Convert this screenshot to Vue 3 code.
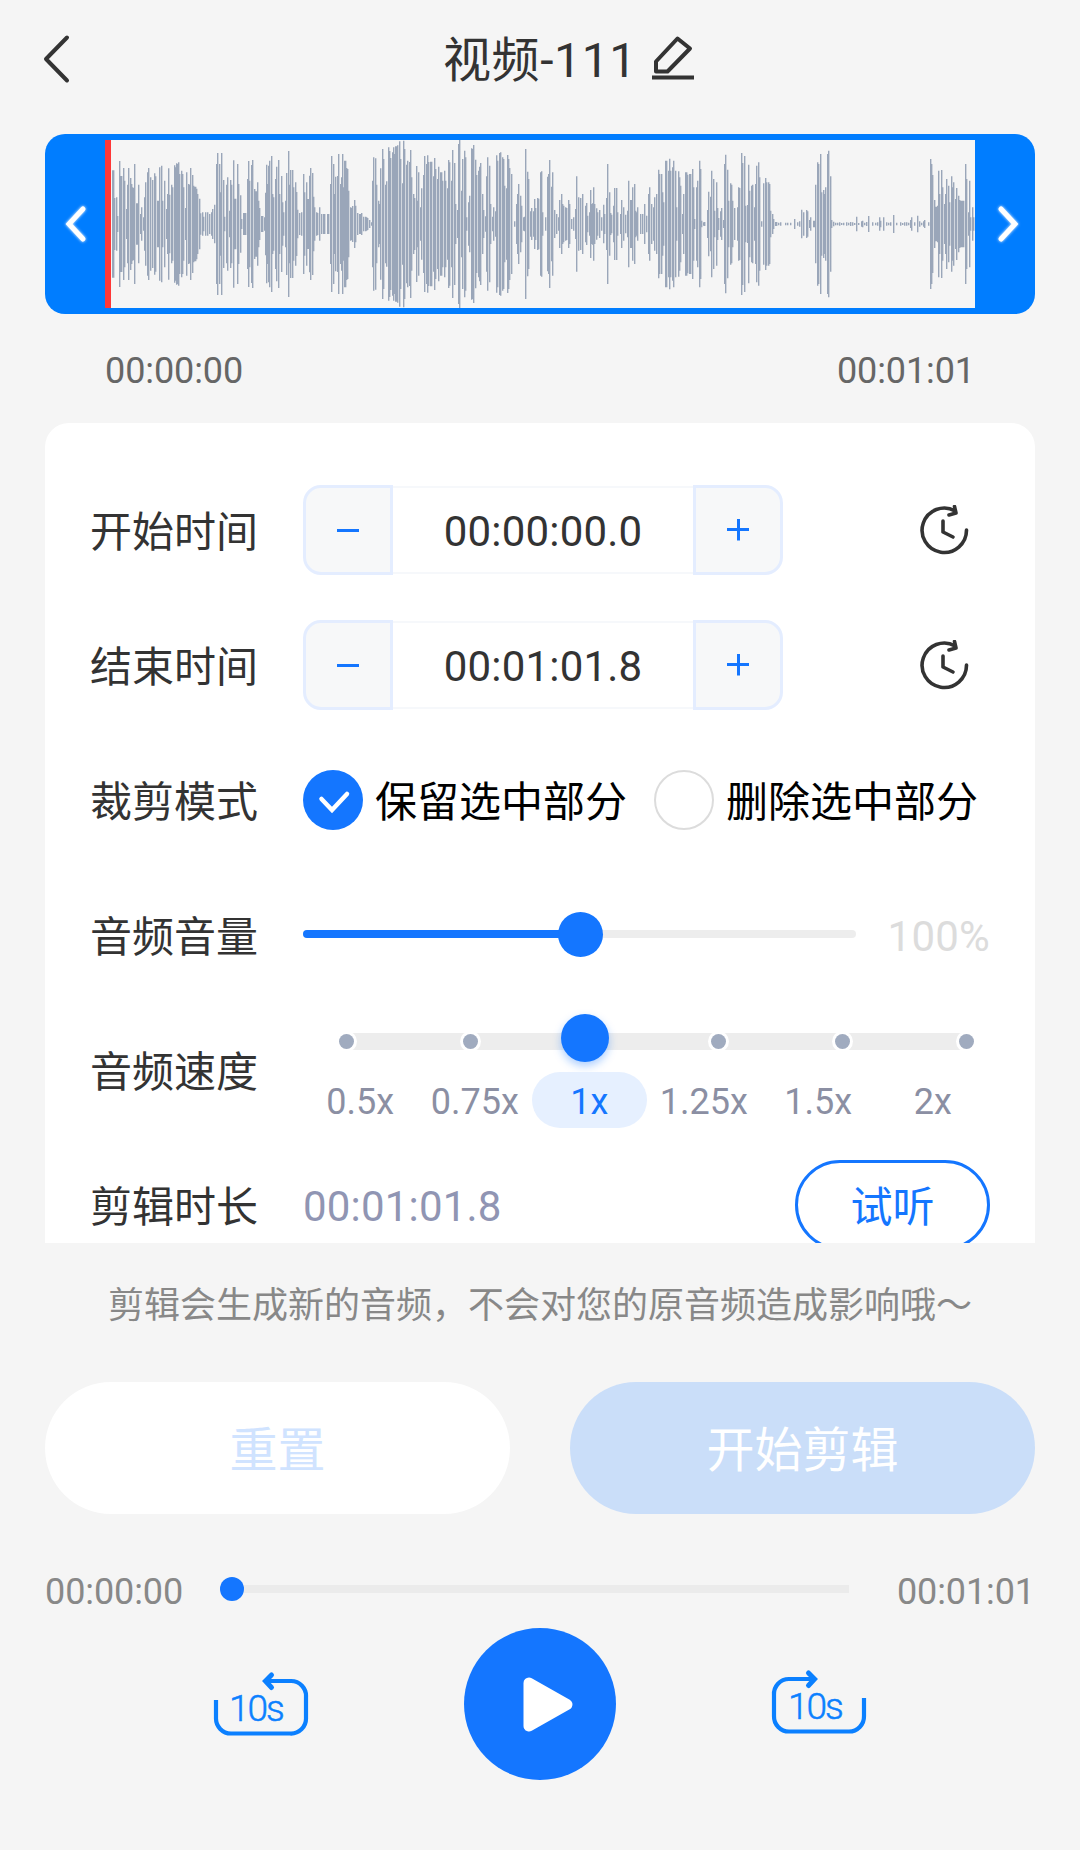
<script setup>
import { ref } from 'vue'

const title = ref('视频-111')
const times = [
  { label: '开始时间', value: '00:00:00.0' },
  { label: '结束时间', value: '00:01:01.8' },
]
const modes = [
  { label: '保留选中部分', checked: true },
  { label: '删除选中部分', checked: false },
]
const speeds = ['0.5x', '0.75x', '1x', '1.25x', '1.5x', '2x']
const speedIndex = 2
const volumePercent = 50

// Each chunk: offset on the wave axis, then "position height" pairs.
const chunks = [
  [-213, '217 161 220 161 223 78 229 80 232 24 238 189 241 144 244 144 250 168 253 130 260 45 263 118 265 168 271 138 274 120 277 110 280 108 283 180 290 62 293 62 295 118 302 30 304 50 310 20 313 80 317 125 322 155 325 168 331 140 337 132 343 152 346 143 352 70 355 70 358 170 364 175 367 70 373 130 379 45 382 90 385 167 388 88 394 118 398 110 403 176 406 170 409 182 412 180 415 185 418 150 424 160 427 150 430 110 436 48 439 155 445 120 448 118 451 168 457 147 461 115 464 112 467 112 470 106 473 90 478 76 481 32 487 35 490 22 497 35 503 35 509 30 515 35 518 45 523 58 529 180 532 213 538 180 541 95 544 213 550 132 553 22 559 118 562 140 567 40 571 132 574 118 580 191 583 76 586 76 592 180 596 120 601 86 604 15 610 33 613 33 616 33 622 135 625 189 628 130 634 177 637 192 643 105 646 98 649 98 652 125 655 70 659 48 664 24 667 24 673 20 676 94 680 178 683 120 686 175 689 190 694 204 697 90 701 80 706 135 709 172 715 192 718 90 724 144 727 65 730 35 736 70 739 153 745 219 748 118 752 162 757 162 760 110 767 125 770 96 773 43 779 33 785 35 790 150 793 95 799 125 802 75 805 75 808 145 811 168 817 153 820 82 824 50 830 35 833 33 838 50 844 30 850 30 853 30 862 30 865 30 871 120 874 204 880 180 883 90 887 142 893 144 896 210 901 120 904 140 907 210 910 110 914 190 917 190 920 168 923 165 926 100 932 50 935 48 938 54 944 72 947 55 953 33 958 30 961 30 965 33 971 22 976 22 979 20 982 18 988 12 994 5'],
  [747, '38 130 41 200 46 197 49 118 55 70 58 60 61 167 67 225 70 195 76 118 79 128 85 230 88 219 91 198 97 215 100 230 103 210 107 233 110 233 112 236 118 248 121 195 127 122 130 250 133 225 139 178 142 190 148 186 151 222 154 140 160 90 163 78 169 174 172 70 175 155 181 50 184 107 190 147 193 204 199 180 202 206 205 186 211 187 214 187 220 143 223 198 226 165 231 135 235 172 241 155 244 155 247 130 253 160 256 130 262 107 265 192 268 185 274 130 277 222 283 183 286 60 292 42 295 240 298 252 304 100 307 195 312 220 316 200 319 20 325 65 328 85 334 227 337 225 340 237 346 193 349 147 355 160 358 172 361 183 367 90 370 42 376 23 379 143 382 200 388 175 391 60 397 22 400 50 405 38 409 206 412 190 418 213 421 215 427 200 430 195 433 115 439 107 442 207 445 195 448 168 454 150 463 8 469 60 472 90 475 120 481 85 484 55 490 20 493 22 496 225 502 157 505 135 511 38 514 48 520 38 523 75 526 48 532 78 535 76 541 155 544 158 547 35 555 20 562 142 565 150 568 192 574 112 577 155 583 42 588 30 596 20 598 72 604 90 607 60 610 55 616 50 619 48 625 72 628 60 634 15 640 20 646 45 649 143 655 80 661 78 667 90 676 55 679 63 682 25 688 35 691 102 694 60 697 62 700 110 703 60 709 47 712 35 718 42 724 20 730 58 733 30 739 78 742 180 748 95 751 33 754 28 760 55 763 108 769 108 772 35 780 30 784 72 790 50 796 28 802 40 805 130 811 72 814 72 817 110 823 120 826 40 829 35 832 50 841 30 847 30 853 60 858 25 865 90 868 110 874 60 881 50 884 80 889 90 895 163 898 150 904 150 907 95 910 65 916 190 919 190 925 160 928 196 931 160 937 170 940 190 946 160 949 50 955 158 958 140 961 115 967 30 970 90 976 155 979 155 982 148 988 150 991 150 997 165 1000 110 1003 15 1009 110 1012 130 1018 190'],
  [1767, '1 165 4 10 10 5 14 6 22 42 25 97 31 82 34 160 40 135 43 40 49 125 52 48 55 18 61 38 64 48 70 12 73 180 76 208 82 163 85 70 91 122 94 118 97 70 103 48 112 50 115 110 118 108 124 213 127 183 133 204 136 55 142 57 145 178 148 100 154 115 157 118 163 50 166 120 169 175 175 185 178 140 184 8 190 122 196 138 199 125 205 125 208 120 211 40 217 30 220 15 226 6 229 6 235 4 241 5 256 4 262 4 271 4 283 15 292 5 298 8 304 43 310 35 319 42 322 38 328 12 331 20 340 10 343 10 346 118 352 185 355 180 361 210 364 95 370 102 373 90 376 110 382 210 385 220 391 143 394 12 400 7 406 4 412 4 418 5 424 3 430 4 439 5 445 4 451 6 457 5 463 3 469 22 475 3 484 8 487 10 493 4 499 6 505 24 517 5 526 4 532 5 538 20 541 10 550 20 559 5 565 4 571 5 580 27 589 4 601 5 607 3 613 5 619 5 625 4 631 12 634 20 643 5 652 25 658 8 664 4 670 8 673 12 685 5 691 195 694 180 697 147 703 72 706 52 709 52 712 55 715 160 718 90 724 162 727 110 733 60 736 90 739 135 745 115 748 65 754 143 757 110 760 125 766 75 769 108 775 85 778 72 781 70 784 70 787 70 790 70 796 180 799 135 805 35 808 130 811 20 817 50 820 20'],
]

const bars = []
for (const [offset, text] of chunks) {
  const n = text.split(' ').map(Number)
  for (let i = 0; i < n.length; i += 2) {
    const x = Math.floor((n[i] + offset) / 3) * 3
    bars.push(`M${x} ${252 - n[i + 1]}h4.2v${n[i + 1] * 2}h-4.2z`)
  }
}
const wavePath = bars.join('')
</script>

<template>
  <div class="page">
    <header class="header">
      <svg class="back" width="28" height="50" viewBox="0 0 28 50" fill="none">
        <path d="M25 3.5 4 25 25 46.500" />
      </svg>
      <h1 class="title">{{ title }}</h1>
      <svg class="edit" width="44" height="46" viewBox="0 0 44 46" fill="none">
        <path d="M26.500 4.500 39 14.500 16.500 37.500H5V27.500z" />
        <path d="M1 43.500H43" />
      </svg>
    </header>

    <div class="wave">
      <div class="handle">
        <svg width="36" height="50" viewBox="0 0 36 50" fill="none"><path d="M26 10 12 25 26 40" /></svg>
      </div>
      <div class="cursor"></div>
      <svg class="bars" viewBox="0 0 2592 504" preserveAspectRatio="none"><path :d="wavePath" /></svg>
      <div class="handle">
        <svg width="36" height="50" viewBox="0 0 36 50" fill="none"><path d="M14 10 28 25 14 40" /></svg>
      </div>
    </div>

    <div class="range">
      <span>00:00:00</span>
      <span>00:01:01</span>
    </div>

    <main class="card">
      <div v-for="t in times" :key="t.label" class="row">
        <label class="label">{{ t.label }}</label>
        <div class="stepper">
          <button class="step minus"><svg width="22" height="22" viewBox="0 0 22 22"><path d="M0 11.500H22" /></svg></button>
          <span class="value">{{ t.value }}</span>
          <button class="step plus"><svg width="22" height="22" viewBox="0 0 22 22"><path d="M0 10.500H22M11.500 0V21.500" /></svg></button>
        </div>
        <svg class="clock" width="50" height="50" viewBox="0 0 50 50" fill="none">
          <path d="M47.500 25A22.200 22.200 0 1 1 36 5.800" />
          <path d="M35.500 1.500 37 8 30 10" />
          <path d="M24 16V27L34 32" />
        </svg>
      </div>

      <div class="row">
        <label class="label">裁剪模式</label>
        <div class="modes">
          <div v-for="m in modes" :key="m.label" class="mode">
            <span class="radio" :class="{ on: m.checked }">
              <svg v-if="m.checked" width="60" height="60" viewBox="0 0 60 60" fill="none"><path d="M18.500 29 29 40 44 24" /></svg>
            </span>
            <span class="mode-text">{{ m.label }}</span>
          </div>
        </div>
      </div>

      <div class="row">
        <label class="label">音频音量</label>
        <div class="volume">
          <div class="volume-fill" :style="{ width: volumePercent + '%' }"></div>
          <div class="volume-thumb"></div>
        </div>
        <span class="percent">100%</span>
      </div>

      <div class="row">
        <label class="label">音频速度</label>
        <div class="speed">
          <div class="speed-track">
            <span v-for="(s, i) in speeds" :key="s" :class="i === speedIndex ? 'knob' : 'dot'"></span>
          </div>
          <div class="speed-labels">
            <span v-for="(s, i) in speeds" :key="s" :class="{ active: i === speedIndex }">{{ s }}</span>
          </div>
        </div>
      </div>

      <div class="row">
        <label class="label">剪辑时长</label>
        <span class="duration">00:01:01.8</span>
        <button class="listen">试听</button>
      </div>
    </main>

    <p class="tip">剪辑会生成新的音频，不会对您的原音频造成影响哦～</p>

    <div class="actions">
      <button class="reset">重置</button>
      <button class="start">开始剪辑</button>
    </div>

    <div class="progress">
      <span>00:00:00</span>
      <div class="track"><i></i></div>
      <span>00:01:01</span>
    </div>

    <div class="controls">
      <svg class="skip" width="96" height="68" viewBox="0 0 96 68" fill="none">
        <path class="line" d="M3 31V49A15 15 0 0 0 18 64.500H77A15 15 0 0 0 93 49V28A15 15 0 0 0 78 12H54" />
        <path class="head" d="M58.500 6 52.500 12 58.500 18.500" />
        <text x="16" y="51.500">10s</text>
      </svg>
      <button class="play">
        <svg width="152" height="152" viewBox="0 0 152 152"><path d="M65 55 103 76.500 65 98z" /></svg>
      </button>
      <svg class="skip forward" width="96" height="68" viewBox="0 0 96 68" fill="none">
        <path class="line" d="M93 31V49A15 15 0 0 1 78 64.500H18A15 15 0 0 1 3 49V28A15 15 0 0 1 18 12H42" />
        <path class="head" d="M37.500 6 43.500 12 37.500 18.500" />
        <text x="17" y="51.500">10s</text>
      </svg>
    </div>
  </div>
</template>

<style>
body {
  background: #f5f5f5;
}
</style>

<style scoped>
.page {
  box-sizing: border-box;
  width: 1080px;
  height: 1850px;
  padding: 0 45px;
  overflow: hidden;
  display: flex;
  flex-direction: column;
  background: #f5f5f5;
  color: #333;
  font-family: Roboto, "Noto Sans CJK SC", sans-serif;
}
button {
  box-sizing: border-box;
  margin: 0;
  padding: 0;
  border: 0;
  font-family: inherit;
}
svg {
  display: block;
}
.header {
  height: 134px;
  display: flex;
  align-items: flex-start;
}
.back {
  margin: 34px 373px 0 -3px;
}
.back path,
.edit path {
  stroke: #333;
  stroke-width: 4;
  stroke-linecap: round;
  stroke-linejoin: round;
}
.title {
  width: 208px;
  margin: 25px 0 0;
  font-size: 48px;
  line-height: 72px;
  font-weight: 400;
  letter-spacing: 0.6px;
  white-space: nowrap;
}
.edit {
  margin-top: 34px;
}
.edit path {
  stroke-linecap: butt;
}
.wave {
  box-sizing: border-box;
  height: 180px;
  padding: 6px 0;
  border-radius: 20px;
  display: flex;
  background: #007dff;
}
.handle {
  width: 60px;
  display: flex;
  align-items: center;
  justify-content: center;
}
.handle path {
  stroke: #fff;
  stroke-width: 5;
  stroke-linecap: round;
}
.handle svg {
  filter: drop-shadow(0 0 1.5px #fff);
}
.cursor {
  width: 6px;
  background: #ff3737;
}
.bars {
  width: 864px;
  height: 168px;
  background: #f5f5f5;
}
.bars path {
  fill: #9aa6b9;
}
.range {
  height: 109px;
  padding: 0 60px;
  display: flex;
  justify-content: space-between;
  font-size: 36px;
  line-height: 114px;
  letter-spacing: -0.1px;
  color: #666;
}
.card {
  box-sizing: border-box;
  height: 820px;
  padding: 39px 45px 0;
  overflow: hidden;
  border-radius: 24px 24px 0 0;
  background: #fff;
  font-size: 42px;
}
.row {
  height: 135px;
  display: flex;
  align-items: center;
}
.label {
  width: 213px;
  padding-bottom: 3px;
  flex: none;
}
.stepper {
  width: 480px;
  height: 90px;
  display: flex;
}
.step {
  width: 90px;
  height: 90px;
  display: flex;
  align-items: center;
  justify-content: center;
  background: #f7f8f9;
  border: 3px solid #e4edff;
}
.step path {
  stroke: #1476ff;
  stroke-width: 3;
}
.minus {
  border-radius: 18px 0 0 18px;
}
.plus {
  border-radius: 0 18px 18px 0;
}
.value {
  box-sizing: border-box;
  width: 300px;
  height: 88px;
  margin-top: 1px;
  border: solid #f6f8fb;
  border-width: 2px 0;
  line-height: 87px;
  letter-spacing: 0.2px;
  text-align: center;
}
.clock {
  margin-left: 136px;
}
.clock path {
  stroke: #333;
  stroke-width: 3.6;
  stroke-linecap: round;
  stroke-linejoin: round;
}
.modes {
  display: flex;
  gap: 27px;
  color: #000;
}
.mode {
  display: flex;
  align-items: center;
  gap: 12px;
  white-space: nowrap;
}
.mode-text {
  padding-bottom: 2px;
}
.radio {
  box-sizing: border-box;
  width: 60px;
  height: 60px;
  border-radius: 50%;
  border: 2.5px solid #dcdcdc;
}
.radio.on {
  border: 0;
  background: #1476ff;
}
.radio path {
  stroke: #fff;
  stroke-width: 4.5;
  stroke-linecap: round;
}
.volume {
  width: 553px;
  height: 8px;
  margin-bottom: 1px;
  border-radius: 4px;
  display: flex;
  align-items: center;
  background: #ededed;
}
.volume-fill {
  height: 8px;
  border-radius: 4px;
  background: #1476ff;
}
.volume-thumb {
  width: 45px;
  height: 45px;
  margin-left: -22px;
  border-radius: 50%;
  background: #1476ff;
  flex: none;
}
.percent {
  margin-left: auto;
  padding-top: 4px;
  letter-spacing: 0.2px;
  color: #dcdcdc;
}
.speed {
  width: 687px;
  height: 117px;
  display: flex;
  flex-direction: column;
  justify-content: space-between;
}
.speed-track {
  width: 620px;
  height: 17px;
  margin: 22px 0 0 43px;
  display: flex;
  align-items: center;
  justify-content: space-between;
  background: #ededed;
}
.dot {
  width: 15px;
  height: 15px;
  margin: 0 -7.5px;
  border-radius: 50%;
  background: #a0abbf;
  box-shadow: 0 0 0 3px #fff;
}
.knob {
  width: 48px;
  height: 48px;
  margin: -9px -14.5px -1px -33.5px;
  border-radius: 50%;
  background: #1476ff;
  box-shadow: 0 4px 9px rgba(20, 118, 255, 0.35);
}
.speed-labels {
  display: flex;
  font-size: 36px;
  line-height: 61px;
  color: #8b8fa3;
}
.speed-labels span {
  flex: 1 1 0;
  height: 56px;
  text-align: center;
  border-radius: 28px;
}
.speed-labels .active {
  background: #e6f0ff;
  color: #1476ff;
}
.duration {
  padding-top: 4px;
  letter-spacing: 0.2px;
  color: #9095b3;
}
.listen {
  width: 195px;
  height: 90px;
  margin-left: auto;
  padding-bottom: 3px;
  border: 3px solid #1476ff;
  border-radius: 45px;
  background: #fff;
  color: #1476ff;
  font-size: 42px;
}
.tip {
  height: 139px;
  margin: 0;
  text-align: center;
  font-size: 36px;
  line-height: 126px;
  color: #888;
}
.actions {
  display: flex;
  gap: 60px;
}
.actions button {
  flex: 1;
  height: 132px;
  padding-bottom: 4px;
  border-radius: 66px;
  font-size: 48px;
}
.reset {
  background: #fff;
  color: #d0e3ff;
}
.start {
  background: #cadef9;
  color: #fff;
}
.progress {
  height: 114px;
  display: flex;
  justify-content: space-between;
  font-size: 36px;
  line-height: 156px;
  letter-spacing: -0.1px;
  color: #888;
}
.track {
  width: 618px;
  height: 8px;
  margin: 71px 0 0;
  display: flex;
  align-items: center;
  background: #ebebeb;
}
.track i {
  width: 24px;
  height: 24px;
  margin-left: -11px;
  border-radius: 50%;
  background: #1476ff;
}
.controls {
  display: flex;
  align-items: flex-start;
  padding: 0 168px;
  justify-content: space-between;
}
.play {
  width: 152px;
  height: 152px;
  border-radius: 50%;
  background: #1476ff;
}
.play path {
  fill: #fff;
  stroke: #fff;
  stroke-width: 11;
  stroke-linejoin: round;
}
.skip {
  margin-top: 41px;
}
.forward {
  margin-top: 39px;
}
.skip .line,
.skip .head {
  stroke: #0b80ff;
  stroke-width: 4.2;
}
.skip .head {
  stroke-width: 5;
  stroke-linecap: round;
}
.skip text {
  fill: #0b80ff;
  stroke: #0b80ff;
  stroke-width: 0.5;
  font-size: 37px;
  font-weight: 300;
  letter-spacing: -2px;
}
</style>
